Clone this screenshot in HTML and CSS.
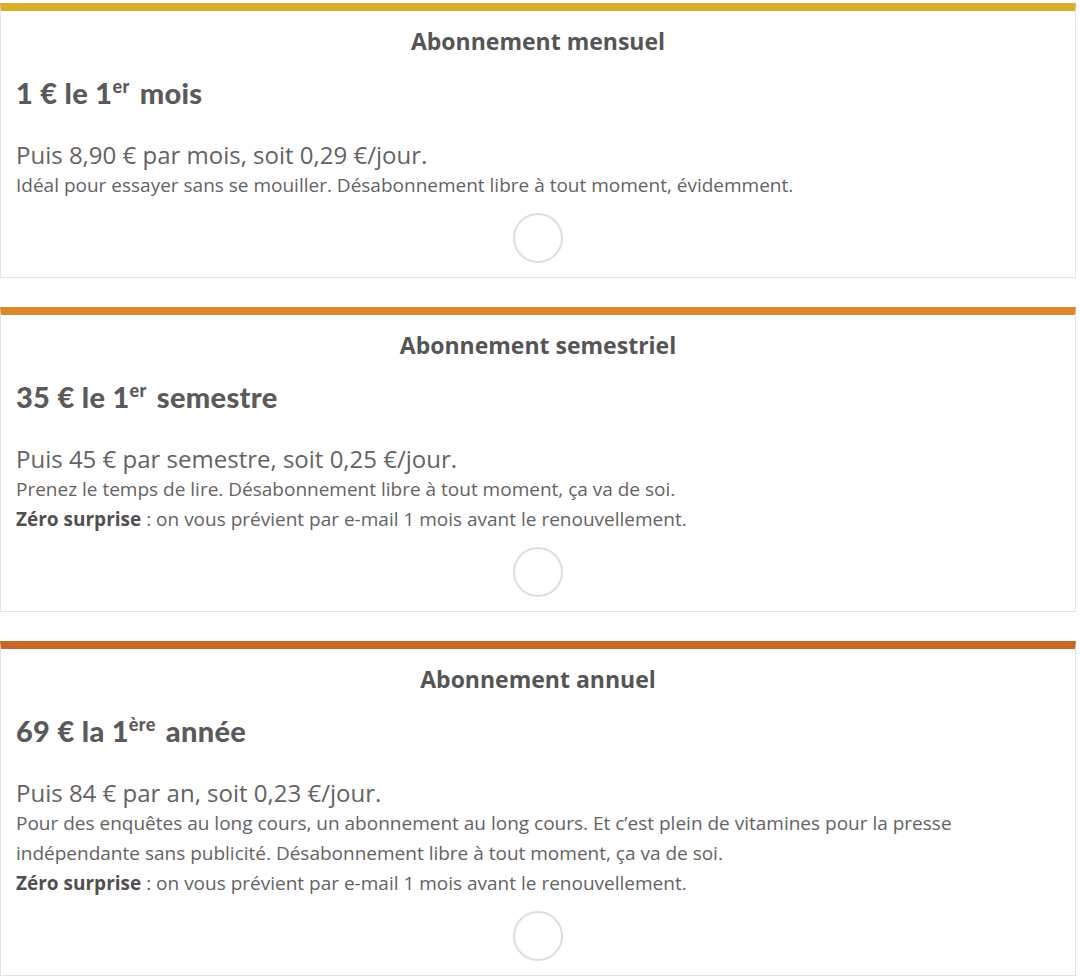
FILE: index.html
```html
<!DOCTYPE html>
<html lang="fr">
<head>
<meta charset="utf-8">
<title>Abonnements</title>
<link rel="stylesheet" href="styles.css">
</head>
<body>
<main class="offers">
  <section class="card card-month">
    <h2 class="card-title">Abonnement mensuel</h2>
    <p class="price">1 € le 1<sup>er</sup> mois</p>
    <p class="then">Puis 8,90 € par mois, soit 0,29 €/jour.</p>
    <p class="desc">Idéal pour essayer sans se mouiller. Désabonnement libre à tout moment, évidemment.</p>
    <div class="radio"></div>
  </section>
  <section class="card card-semester">
    <h2 class="card-title">Abonnement semestriel</h2>
    <p class="price">35 € le 1<sup>er</sup> semestre</p>
    <p class="then">Puis 45 € par semestre, soit 0,25 €/jour.</p>
    <p class="desc">Prenez le temps de lire. Désabonnement libre à tout moment, ça va de soi.</p>
    <p class="desc"><strong>Zéro surprise</strong> : on vous prévient par e-mail 1 mois avant le renouvellement.</p>
    <div class="radio"></div>
  </section>
  <section class="card card-year">
    <h2 class="card-title">Abonnement annuel</h2>
    <p class="price">69 € la 1<sup>ère</sup> année</p>
    <p class="then">Puis 84 € par an, soit 0,23 €/jour.</p>
    <p class="desc">Pour des enquêtes au long cours, un abonnement au long cours. Et c’est plein de vitamines pour la presse indépendante sans publicité. Désabonnement libre à tout moment, ça va de soi.</p>
    <p class="desc"><strong>Zéro surprise</strong> : on vous prévient par e-mail 1 mois avant le renouvellement.</p>
    <div class="radio"></div>
  </section>
</main>
</body>
</html>
```

FILE: styles.css
```css
* { box-sizing: border-box; }
html, body { margin: 0; padding: 0; background: #fff; }
body {
  font-family: "Open Sans", "Lato", "Liberation Sans", sans-serif;
  color: #636363;
}
.offers {
  width: 1076px;
  padding-top: 3px;
  display: flex;
  flex-direction: column;
  gap: 29px;
}
.card {
  border: 1px solid #e3e3e3;
  border-top: 8px solid #d9ae2b;
  padding: 0 15px 14px;
  display: flex;
  flex-direction: column;
}
.card-month { border-top-color: #d9ae2b; }
.card-semester { border-top-color: #dc8a2c; }
.card-year { border-top-color: #c6672a; }
.card-title {
  margin: 15px 0 0;
  font-size: 23px;
  line-height: 30px;
  font-weight: 700;
  text-align: center;
  color: #555;
}
.price {
  margin: 19px 0 0;
  font-family: "Lato", "Open Sans", sans-serif;
  font-size: 29px;
  line-height: 36px;
  font-weight: 900;
  letter-spacing: 0.3px;
  color: #5a5a5a;
}
.price sup {
  font-size: 18px;
  line-height: 0;
  vertical-align: 0;
  position: relative;
  top: -11px;
  margin-right: 3px;
}
.then {
  margin: 29px 0 0;
  font-size: 24px;
  line-height: 30px;
  color: #636363;
}
.desc {
  margin: 0;
  font-size: 19px;
  line-height: 30px;
  color: #636363;
}
.desc strong { font-weight: 700; color: #505050; }
.radio {
  margin: 13px auto 0;
  width: 50px;
  height: 50px;
  border: 2px solid #dedede;
  border-radius: 50%;
}
```
